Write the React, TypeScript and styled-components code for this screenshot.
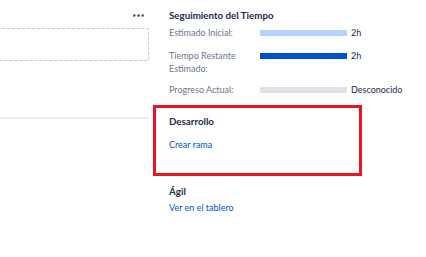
import React from "react";
import styled, { createGlobalStyle } from "styled-components";

const Global = createGlobalStyle`
  html, body { margin: 0; padding: 0; background: #fff; }
  body { font-family: Lato, "Noto Sans", sans-serif; color: #172b4d; }
`;

const Page = styled.div`
  display: flex;
  gap: 3px;
  width: 426px;
  height: 257px;
  overflow: hidden;
`;

const LeftCol = styled.div`
  width: 150px;
  flex: none;
  display: flex;
  flex-direction: column;
`;

const LeftHeader = styled.div`
  height: 28px;
  display: flex;
  justify-content: flex-end;
  align-items: flex-start;
  padding-right: 6px;
  padding-top: 14px;
  box-sizing: border-box;
`;

const DashedBox = styled.div`
  margin-left: -10px;
  width: 159px;
  height: 33px;
  border: 1px dashed #c1c7d0;
  box-sizing: border-box;
  border-radius: 2px;
`;

const Divider = styled.div`
  margin-top: 56px;
  height: 2px;
  background: #ebecf0;
  width: 149px;
`;

const RightCol = styled.div`
  width: 210px;
  flex: none;
  display: flex;
  flex-direction: column;
  font-size: 9px;
`;

const Section = styled.div`
  padding-left: 16px;
`;

const Heading = styled.div`
  font-weight: 700;
  font-size: 9.75px;
  line-height: 14px;
  color: #172b4d;
`;

const TimeHeading = styled(Heading)`
  padding-top: 8px;
`;

const Rows = styled.div`
  display: flex;
  flex-direction: column;
  margin-top: 4px;
`;

const Row = styled.div<{ $gap: number }>`
  display: flex;
  align-items: flex-start;
  margin-top: ${(p) => p.$gap}px;
  line-height: 13px;
`;

const Label = styled.div`
  width: 91px;
  flex: none;
  color: #6b778c;
`;

const Bar = styled.div<{ $color: string }>`
  width: 87px;
  height: 6px;
  margin-top: 4px;
  background: ${(p) => p.$color};
  flex: none;
`;

const Value = styled.div`
  margin-left: 4px;
  color: #172b4d;
  white-space: nowrap;
`;

const Highlight = styled.div`
  margin-top: 9px;
  width: 209px;
  height: 71px;
  box-sizing: border-box;
  border: 3px solid #e8141f;
  padding: 6px 0 0 13px;
  display: flex;
  flex-direction: column;
`;

const Link = styled.a`
  color: #0052cc;
  text-decoration: none;
  line-height: 14px;
  font-size: 9px;
`;

const DevLink = styled(Link)`
  margin-top: 10px;
`;

const AgileSection = styled(Section)`
  margin-top: 8px;
  display: flex;
  flex-direction: column;
  gap: 3px;
`;

const Dots = () => (
  <svg width="11" height="3" viewBox="0 0 11 3">
    <circle cx="1.3" cy="1.5" r="1.3" fill="#42526e" />
    <circle cx="5.5" cy="1.5" r="1.3" fill="#42526e" />
    <circle cx="9.7" cy="1.5" r="1.3" fill="#42526e" />
  </svg>
);

export default function App() {
  return (
    <Page>
      <Global />
      <LeftCol>
        <LeftHeader>
          <Dots />
        </LeftHeader>
        <DashedBox />
        <Divider />
      </LeftCol>
      <RightCol>
        <Section>
          <TimeHeading>Seguimiento del Tiempo</TimeHeading>
          <Rows>
            <Row $gap={0}>
              <Label>Estimado Inicial:</Label>
              <Bar $color="#b3d4ff" />
              <Value>2h</Value>
            </Row>
            <Row $gap={10}>
              <Label>
                Tiempo Restante
                <br />
                Estimado:
              </Label>
              <Bar $color="#0052cc" />
              <Value>2h</Value>
            </Row>
            <Row $gap={8}>
              <Label>Progreso Actual:</Label>
              <Bar $color="#dfe1e6" />
              <Value>Desconocido</Value>
            </Row>
          </Rows>
        </Section>
        <Highlight>
          <Heading>Desarrollo</Heading>
          <DevLink href="#">Crear rama</DevLink>
        </Highlight>
        <AgileSection>
          <Heading>Ágil</Heading>
          <Link href="#">Ver en el tablero</Link>
        </AgileSection>
      </RightCol>
    </Page>
  );
}
